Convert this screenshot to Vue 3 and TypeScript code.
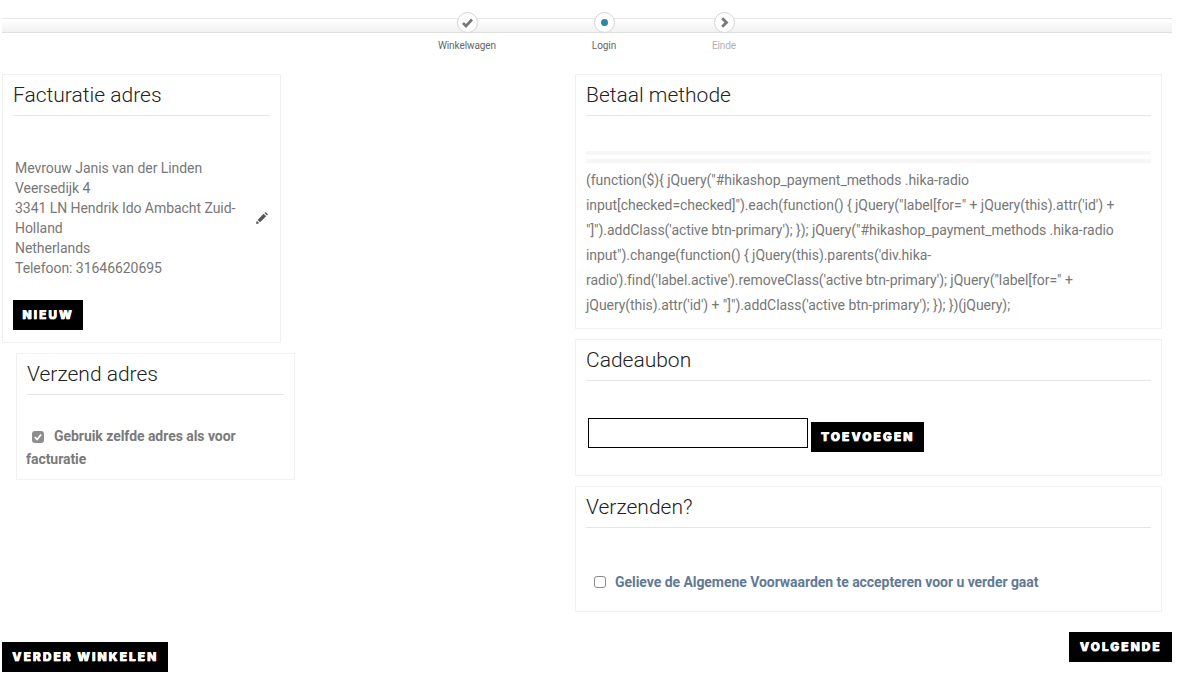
<script setup lang="ts">
const addressLines: string[] = [
  'Mevrouw Janis van der Linden',
  'Veersedijk 4',
  '3341 LN Hendrik Ido Ambacht Zuid-Holland',
  'Netherlands',
  'Telefoon: 31646620695',
]
const code: string = `(function($){ jQuery("#hikashop_payment_methods .hika-radio input[checked=checked]").each(function() { jQuery("label[for=" + jQuery(this).attr('id') + "]").addClass('active btn-primary'); }); jQuery("#hikashop_payment_methods .hika-radio input").change(function() { jQuery(this).parents('div.hika-radio').find('label.active').removeClass('active btn-primary'); jQuery("label[for=" + jQuery(this).attr('id') + "]").addClass('active btn-primary'); }); })(jQuery);`
</script>

<template>
  <div class="page">
    <nav class="steps">
      <div class="track"></div>
      <div class="step step-one">
        <span class="node">
          <svg width="11" height="11" viewBox="0 0 11 11"><path d="M1 6l3 3 6-6.5" fill="none" stroke="#777" stroke-width="2.6" /></svg>
        </span>
        <span class="step-label">Winkelwagen</span>
      </div>
      <div class="step step-two">
        <span class="node"><span class="dot"></span></span>
        <span class="step-label">Login</span>
      </div>
      <div class="step step-three">
        <span class="node">
          <svg width="11" height="11" viewBox="0 0 11 11"><path d="M3.2 1.2l4.3 4.3-4.3 4.3" fill="none" stroke="#777" stroke-width="2.8" /></svg>
        </span>
        <span class="step-label muted">Einde</span>
      </div>
    </nav>

    <main class="columns">
      <section class="column">
        <article class="card billing">
          <h2>Facturatie adres</h2>
          <div class="address-row">
            <p class="address">
              <span v-for="line in addressLines" :key="line" class="address-line">{{ line }}</span>
            </p>
            <svg class="pencil" width="14" height="14" viewBox="0 0 14 14">
              <path d="M1 13l.8-3.2 2.5 2.4zM2.6 8.9l6-6.1 2.5 2.4-6 6.1zM9.5 2l1-1 2.5 2.4-1 1z" fill="#555" />
            </svg>
          </div>
          <button class="btn btn-new" type="button">Nieuw</button>
        </article>

        <article class="card shipping">
          <h2>Verzend adres</h2>
          <p class="same-address">
            <span class="check checked">
              <svg width="10" height="10" viewBox="0 0 10 10"><path d="M1.8 5.2l2.3 2.3 4-5" fill="none" stroke="#fff" stroke-width="1.8" /></svg>
            </span>
            <strong>Gebruik zelfde adres als voor facturatie</strong>
          </p>
        </article>
      </section>

      <section class="column column-right">
        <article class="card payment">
          <h2>Betaal methode</h2>
          <div class="stripes"><span></span><span></span></div>
          <p class="code">{{ code }}</p>
        </article>

        <article class="card voucher">
          <h2>Cadeaubon</h2>
          <div class="voucher-row">
            <input class="voucher-input" type="text" aria-label="Cadeaubon" />
            <button class="btn btn-add" type="button">Toevoegen</button>
          </div>
        </article>

        <article class="card send">
          <h2>Verzenden?</h2>
          <p class="terms">
            <span class="check"></span>
            <strong>Gelieve de Algemene Voorwaarden te accepteren voor u verder gaat</strong>
          </p>
        </article>
      </section>
    </main>

    <footer class="actions">
      <button class="btn btn-continue" type="button">Verder winkelen</button>
      <button class="btn btn-next" type="button">Volgende</button>
    </footer>
  </div>
</template>

<style>
html, body { background: #fff; }
</style>

<style scoped>
.page {
  width: 1172px;
  height: 685px;
  padding-left: 2px;
  padding-top: 12px;
  box-sizing: border-box;
  font-family: Roboto, "Liberation Sans", sans-serif;
  font-size: 14px;
  letter-spacing: -0.05px;
  color: #777;
  overflow: hidden;
}
.steps {
  position: relative;
  display: flex;
  height: 62px;
  padding-left: 430px;
}
.track {
  position: absolute;
  left: 0;
  right: 0;
  top: 6px;
  height: 15px;
  box-sizing: border-box;
  border-top: 1px solid #e6e6e6;
  border-bottom: 1px solid #e0e0e0;
  background: linear-gradient(#fff, #f1f1f1);
}
.step {
  position: relative;
  width: 70px;
  display: flex;
  flex-direction: column;
  align-items: center;
}
.step-two { margin-left: 67px; }
.step-three { margin-left: 50px; }
.node {
  width: 21px;
  height: 21px;
  box-sizing: border-box;
  border: 1px solid #d4d4d4;
  border-radius: 50%;
  background: #fff;
  display: flex;
  align-items: center;
  justify-content: center;
}
.dot {
  width: 7px;
  height: 7px;
  border-radius: 50%;
  background: #2d86a3;
}
.step-label {
  margin-top: 6px;
  font-size: 10px;
  line-height: 14px;
  letter-spacing: -0.08px;
  color: #666;
  white-space: nowrap;
}
.step-label.muted { color: #b0b0b0; }

.columns {
  display: flex;
  align-items: flex-start;
}
.column {
  width: 573px;
  display: flex;
  flex-direction: column;
  gap: 10px;
}
.column-right { width: 587px; }
.card {
  box-sizing: border-box;
  border: 1px solid #f1f1f1;
  padding: 0 10px;
  background: #fff;
}
h2 {
  margin: 0;
  height: 40px;
  line-height: 41px;
  border-bottom: 1px solid #e6e6e6;
  font-size: 21px;
  font-weight: 300;
  letter-spacing: 0;
  color: #222;
  box-sizing: content-box;
}
.billing { width: 279px; height: 269px; }
.address-row {
  display: flex;
  align-items: center;
  margin-top: 42px;
  padding-left: 2px;
}
.address {
  margin: 0;
  width: 228px;
  line-height: 20px;
  flex: none;
}
.address-line { display: block; }
.pencil { margin-left: 12px; flex: none; }
.btn {
  display: block;
  border: 0;
  padding: 0 0 2px;
  height: 30px;
  background: #000;
  color: #fff;
  font-family: Inter, "Liberation Sans", sans-serif;
  font-size: 12px;
  font-weight: 900;
  letter-spacing: 1.95px;
  text-transform: uppercase;
  text-align: center;
  text-shadow: 0.4px 0 0 #fff, 0 1px 0 #666;
}
.btn-new { width: 70px; margin-top: 22px; }
.shipping { width: 279px; height: 127px; margin-left: 14px; }
.same-address {
  margin: 30px 0 0 -1px;
  line-height: 23px;
  font-size: 14px;
  color: #7a7a7a;
}
.check {
  display: inline-flex;
  align-items: center;
  justify-content: center;
  width: 12px;
  height: 12px;
  box-sizing: border-box;
  border: 1px solid #8a8a8a;
  border-radius: 3px;
  background: #fff;
  vertical-align: -1px;
}
.check.checked {
  border: 0;
  background: #8e8e8e;
}
.same-address .check { margin: 0 10px 0 6px; }
.payment { height: 255px; }
.stripes {
  margin-top: 35px;
  display: flex;
  flex-direction: column;
  gap: 4px;
}
.stripes span {
  display: block;
  height: 4px;
  background: #f7f7f7;
}
.code {
  margin: 5px 0 0;
  line-height: 25px;
}
.voucher { height: 137px; }
.voucher-row {
  display: flex;
  align-items: flex-start;
  margin-top: 37px;
  padding-left: 2px;
}
.voucher-input {
  width: 220px;
  height: 30px;
  box-sizing: border-box;
  border: 1px solid #000;
  padding: 0;
  background: #fff;
  outline: none;
}
.btn-add { width: 113px; margin: 4px 0 0 3px; }
.send { height: 126px; }
.terms {
  margin: 44px 0 0 8px;
  line-height: 20px;
  color: #617a93;
}
.terms .check { margin-right: 9px; }
.actions {
  display: flex;
  justify-content: space-between;
  align-items: flex-start;
  margin-top: 20px;
}
.btn-continue { width: 166px; margin-top: 10px; }
.btn-next { width: 103px; }
</style>
